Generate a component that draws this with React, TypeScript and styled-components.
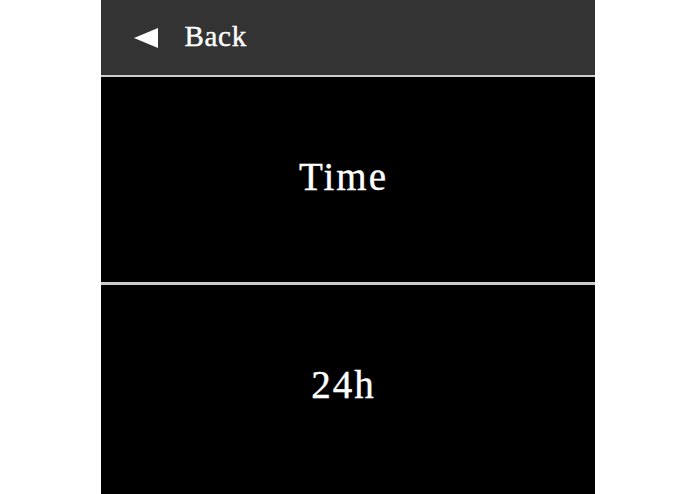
import React from "react";
import styled, { createGlobalStyle } from "styled-components";

const Global = createGlobalStyle`
  html, body { margin: 0; padding: 0; background: #ffffff; }
  body { font-family: "Liberation Serif", "Times New Roman", serif; }
`;

const Panel = styled.div`
  width: 494px;
  height: 494px;
  margin: 0 auto;
  background: #000;
  display: flex;
  flex-direction: column;
  overflow: hidden;
`;

const Header = styled.header`
  height: 75px;
  flex: none;
  background: #333333;
  border-bottom: 2px solid #cccccc;
  display: flex;
  align-items: center;
  padding-left: 33px;
  gap: 27px;
`;

const BackLabel = styled.span`
  color: #fff;
  font-size: 29px;
  letter-spacing: 0.7px;
  line-height: 1;
  margin-top: -3px;
  -webkit-text-stroke: 0.4px #fff;
`;

const Option = styled.div<{ $divider?: boolean }>`
  height: 199px;
  padding: 0 8px 6px 0;
  flex: none;
  display: flex;
  align-items: center;
  justify-content: center;
  border-bottom: ${(p) => (p.$divider ? "3px solid #cccccc" : "none")};
  color: #fff;
  font-size: 39px;
  letter-spacing: 2px;
  -webkit-text-stroke: 0.4px #fff;
`;

const Arrow = () => (
  <svg width="24" height="20" viewBox="0 0 24 20">
    <polygon points="0,10 24,0 24,20" fill="#ffffff" />
  </svg>
);

export default function App() {
  return (
    <>
      <Global />
      <Panel>
        <Header>
          <Arrow />
          <BackLabel>Back</BackLabel>
        </Header>
        <Option $divider>Time</Option>
        <Option>24h</Option>
      </Panel>
    </>
  );
}
